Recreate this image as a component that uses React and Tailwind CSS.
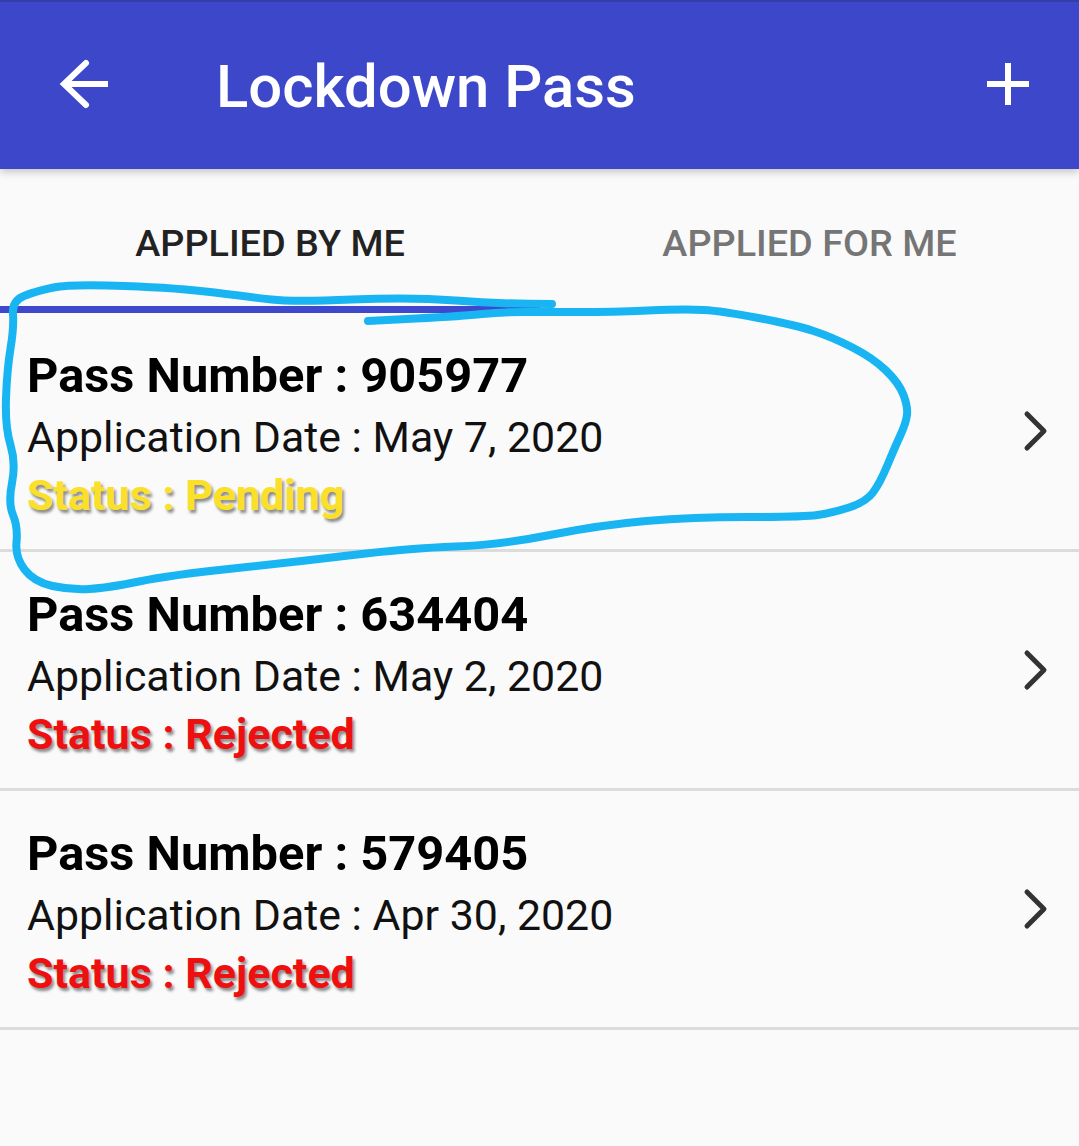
import { Fragment } from 'react'

const passes = [
  { number: '905977', date: 'May 7, 2020', status: 'Pending', color: 'text-[#fbe02a]' },
  { number: '634404', date: 'May 2, 2020', status: 'Rejected', color: 'text-[#ee1010]' },
  { number: '579405', date: 'Apr 30, 2020', status: 'Rejected', color: 'text-[#ee1010]' },
]

// pen annotation drawn over the first row
const scribble = [
  [552, 304], [500, 304], [411, 297], [293, 302], [250, 297], [179, 288], [71, 284], [36, 291], [12, 301],
  [14, 327], [7, 370], [5, 427], [16, 463], [8, 503], [18, 527], [15, 557], [34, 582], [71, 590], [107, 588],
  [171, 575], [286, 563], [411, 548], [500, 545], [600, 525], [692, 517], [803, 517], [832, 513], [866, 502],
  [880, 483], [895, 447], [906, 423], [908, 407], [899, 383], [873, 358], [832, 337], [795, 325], [722, 311],
  [685, 309], [611, 312], [548, 312], [500, 312], [464, 316], [368, 321],
]

const smooth = pts => {
  let d = `M${pts[0][0]} ${pts[0][1]}`
  for (let i = 1; i < pts.length - 1; i++) {
    const mx = (pts[i][0] + pts[i + 1][0]) / 2
    const my = (pts[i][1] + pts[i + 1][1]) / 2
    d += ` Q${pts[i][0]} ${pts[i][1]} ${mx} ${my}`
  }
  const last = pts[pts.length - 1]
  return d + ` L${last[0]} ${last[1]}`
}

const PassRow = ({ number, date, status, color }) => (
  <div className="h-[239px] box-border border-b-[3px] border-[#dcdcdc] pl-[27px] pr-[30px] pt-[38px] flex justify-between">
    <div>
      <div className="text-[48.8px] leading-[50px] font-bold text-black">Pass Number : {number}</div>
      <div className="text-[42.85px] leading-[48px] mt-[12px] text-[#111]">Application Date : {date}</div>
      <div className={`text-[43px] leading-[48px] mt-[10px] font-bold [text-shadow:2px_3px_3px_rgba(0,0,0,0.45)] ${color}`}>
        Status : {status}
      </div>
    </div>
    <svg width="28" height="44" viewBox="0 0 28 44" className="mt-[58px]" fill="none" stroke="#333" strokeWidth="5" strokeLinecap="round" strokeLinejoin="round">
      <path d="M6 5 L23 22 L6 39" />
    </svg>
  </div>
)

export default function App() {
  return (
    <div className="relative w-[1079px] h-[1146px] overflow-hidden bg-[#fafafa] font-['Roboto',sans-serif]">
      <header className="relative h-[169px] bg-[#3d47c9] border-t-2 border-[#343da8] shadow-[0_3px_8px_rgba(0,0,0,0.22)] flex items-center pl-[58px] pr-[49px]">
        <svg width="52" height="52" viewBox="0 0 52 52" fill="none" stroke="white" strokeWidth="6" className="-mt-[4px]">
          <path d="M50 26 H7" />
          <path d="M28 5 L6 26 L28 47" strokeLinecap="round" />
        </svg>
        <h1 className="ml-[106px] text-[59.8px] leading-none font-medium text-white flex-1 mt-[4px]">Lockdown Pass</h1>
        <svg width="44" height="44" viewBox="0 0 44 44" fill="none" stroke="white" strokeWidth="6" className="-mt-[4px]">
          <path d="M22 1 V43 M1 22 H43" />
        </svg>
      </header>

      <div className="h-[144px] flex">
        <div className="w-[540px] flex flex-col">
          <div className="flex-1 flex items-center justify-center text-[37.8px] font-medium text-[#222] pt-[11px]">APPLIED BY ME</div>
          <div className="h-[7px] bg-[#3f48cc]" />
        </div>
        <div className="w-[539px] flex items-center justify-center text-[37.8px] font-medium text-[#757575] pt-[4px]">APPLIED FOR ME</div>
      </div>

      {passes.map(p => (
        <Fragment key={p.number}>
          <PassRow {...p} />
        </Fragment>
      ))}

      <svg className="absolute inset-0 pointer-events-none" width="1079" height="1146" viewBox="0 0 1079 1146" fill="none">
        <path d={smooth(scribble)} stroke="#19b5f3" strokeWidth="8" strokeLinecap="round" strokeLinejoin="round" />
      </svg>
    </div>
  )
}
